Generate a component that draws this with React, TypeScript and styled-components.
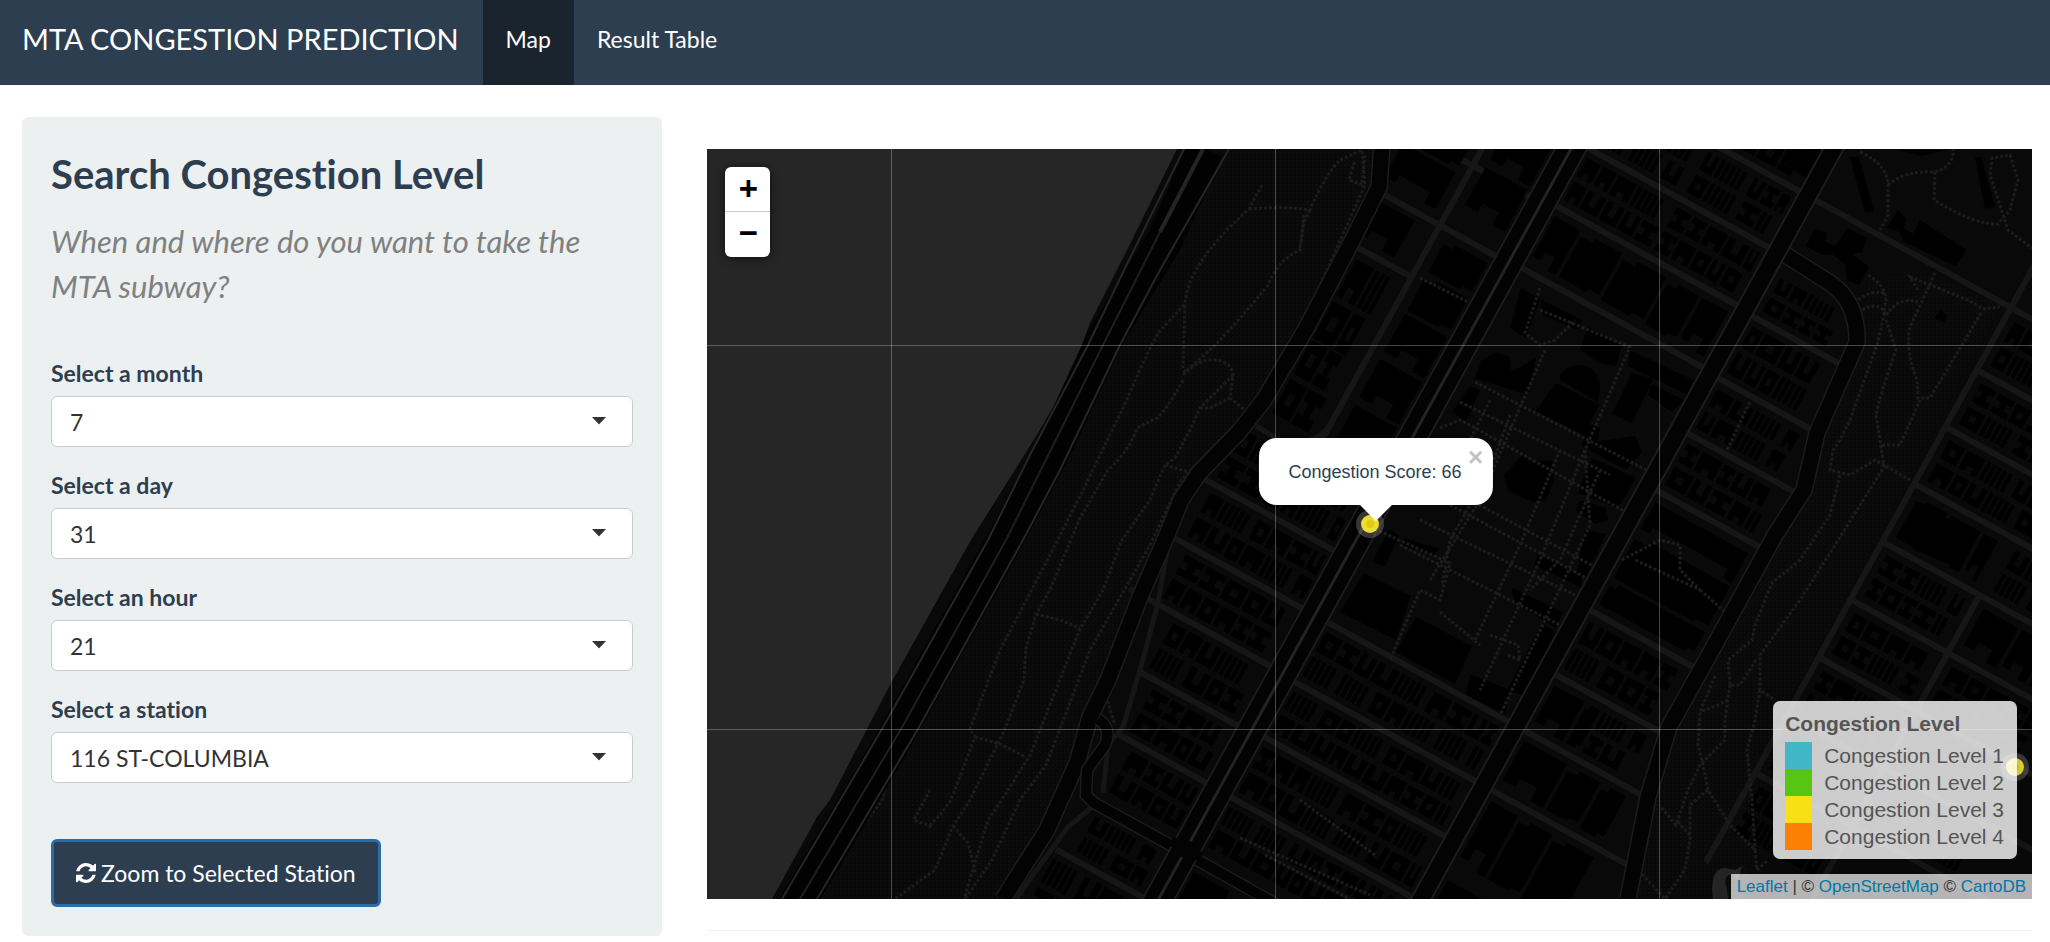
import React, { useState } from "react";
import styled, { createGlobalStyle, css } from "styled-components";

const GlobalStyle = createGlobalStyle`
  *, *::before, *::after { box-sizing: border-box; }
  body {
    margin: 0;
    background: #fff;
    color: #2c3e50;
    font-family: Lato, "Liberation Sans", sans-serif;
    font-size: 23px;
    font-variant-ligatures: none;
    line-height: 32px;
  }
`;

/* ---------- navigation ---------- */

const Navbar = styled.header`
  display: flex;
  align-items: stretch;
  min-height: 85px;
  background: #2c3e50;
`;

const Brand = styled.a`
  display: flex;
  align-items: center;
  padding: 0 24px 8px 22px;
  color: #fff;
  font-size: 29px;
  text-decoration: none;
`;

const Tabs = styled.nav`
  display: flex;
`;

const Tab = styled.a<{ $active?: boolean }>`
  display: flex;
  align-items: center;
  padding: 0 23px 8px;
  color: #fff;
  text-decoration: none;
  background: ${(p) => (p.$active ? "#1a242f" : "transparent")};
`;

/* ---------- page ---------- */

const Page = styled.main`
  display: grid;
  grid-template-columns: minmax(0, 640fr) minmax(0, 1325fr);
  column-gap: 45px;
  align-items: start;
  padding: 32px 18px 0 22px;
`;

const Sidebar = styled.form`
  padding: 29px;
  border-radius: 6px;
  background: #ecf0f1;
`;

const Title = styled.h2`
  margin: 6px 0 23px;
  font-size: 40px;
  font-weight: 700;
  line-height: 44px;
`;

const Lead = styled.p`
  margin: 0 0 48px;
  color: gray;
  font-size: 31px;
  font-style: italic;
  line-height: 45px;
`;

const Field = styled.div`
  margin-bottom: 22px;
`;

const Label = styled.label`
  display: block;
  margin-bottom: 7px;
  font-weight: 700;
`;

const SelectBox = styled.div`
  position: relative;
`;

const Select = styled.select`
  display: block;
  width: 100%;
  height: 51px;
  padding: 0 48px 0 18px;
  border: 1px solid #ccc;
  border-radius: 6px;
  background: #fff;
  color: #333;
  font: inherit;
  appearance: none;
`;

const Caret = styled.svg`
  position: absolute;
  top: 21px;
  right: 27px;
  width: 14px;
  height: 8px;
  fill: #333;
  pointer-events: none;
`;

const ZoomToStation = styled.button`
  display: flex;
  align-items: center;
  gap: 5px;
  height: 68px;
  margin-top: 56px;
  padding: 0 22px;
  border: 3px solid #2c6ca6;
  border-radius: 6px;
  background: #2c3e50;
  color: #fff;
  font: inherit;
`;

const RefreshIcon = styled.svg`
  width: 20px;
  height: 20px;
  fill: currentColor;
`;

const Content = styled.section`
  padding-top: 32px;
`;

const Rule = styled.hr`
  height: 1px;
  margin: 31px 0 0;
  border: 0;
  background: #ecf0f1;
`;

/* ---------- map ---------- */

const MapFrame = styled.div`
  position: relative;
  height: 750px;
  overflow: hidden;
  background: #090909;
  font-family: "Liberation Sans", Arial, sans-serif;
`;

const Tiles = styled.svg`
  display: block;
  width: 100%;
  height: 100%;
`;

const ZoomControl = styled.div`
  position: absolute;
  top: 18px;
  left: 18px;
  width: 45px;
  border-radius: 6px;
  background: #fff;
  box-shadow: 0 1px 8px rgba(0, 0, 0, 0.65);
`;

const ZoomButton = styled.button<{ $divided?: boolean }>`
  display: flex;
  align-items: center;
  justify-content: center;
  width: 45px;
  height: 45px;
  padding: 2px 0 0 2px;
  border: 0;
  background: transparent;
  color: #000;
  font: 700 33px/45px "Liberation Mono", monospace;
  ${(p) =>
    p.$divided &&
    css`
      padding-top: 5px;
      border-bottom: 1px solid #ccc;
    `}
`;

const Popup = styled.div`
  position: absolute;
  bottom: calc(50% + 19px);
  left: calc(50% + 6px);
  transform: translateX(-50%);
  padding: 21px 31px 19px 30px;
  border-radius: 18px;
  background: #fff;
  color: #2c3e50;
  font-size: 18px;
  line-height: 27px;
  white-space: nowrap;
`;

const PopupTip = styled.svg`
  position: absolute;
  top: 100%;
  left: calc(50% - 16px);
  width: 32px;
  height: 16px;
  fill: #fff;
`;

const PopupClose = styled.button`
  position: absolute;
  top: 7px;
  right: 5px;
  width: 24px;
  height: 24px;
  padding: 0;
  border: 0;
  background: transparent;
  color: #c3c3c3;
  font: 700 26px/24px "Liberation Sans", Arial, sans-serif;
`;

const Legend = styled.aside`
  position: absolute;
  right: 15px;
  bottom: 40px;
  padding: 9px 13px 9px 12px;
  border-radius: 7px;
  background: rgba(255, 255, 255, 0.8);
  box-shadow: 0 0 22px rgba(0, 0, 0, 0.2);
  color: #555;
  font-size: 21px;
  line-height: 27px;
`;

const LegendTitle = styled.strong`
  display: block;
  margin-bottom: 5px;
`;

const LegendRow = styled.div`
  display: flex;
  gap: 12px;
`;

const Swatch = styled.i<{ $color: string }>`
  width: 27px;
  height: 27px;
  background: ${(p) => p.$color};
`;

const Attribution = styled.footer`
  position: absolute;
  right: 0;
  bottom: 0;
  padding: 0 6px;
  background: rgba(255, 255, 255, 0.7);
  color: #333;
  font-size: 17px;
  line-height: 25px;

  a {
    color: #0078a8;
    text-decoration: none;
  }
`;

/* ---------- street map drawing ---------- */

/* The street grid is turned by this angle; blocks are listed in the grid's own
   frame, whose origin is the top end of Broadway. */
const GRID = "translate(1571 149) rotate(28.8)";

type Block = [number, number, number, number]; // x0, x1, y0, y1

const crossStreets: [number, number, number][] = [
  // y, x0, x1
  [-140, 0, 230], [-73, 0, 720], [-9, 0, 230], [57, 0, 230], [128, 0, 230],
  [59, 230, 342], [130, 230, 352], [193, 230, 366], [258, 230, 364], [395, 230, 364],
  [468, 230, 364], [532, 0, 379], [600, 0, 394], [663, 0, 230], [732, 0, 230],
  [130, -150, 0], [62, -160, 0], [189, -148, -78], [466, -170, 0], [532, -169, 0], [598, -175, 0],
  [666, -128, 0], [731, -114, 0], [862, -114, 0],
  [-2, 462, 720], [63, 462, 720], [128, 462, 720], [194, 462, 760], [260, 462, 760],
  [326, 462, 760], [392, 462, 760], [458, 462, 760],
];

const fineBlocks: Block[] = [
  [18, 118, -64, -18], [122, 216, -64, -18], [18, 116, 0, 48], [121, 216, 0, 48],
  [122, 216, -130, -82], [246, 318, 12, 50],
  [244, 330, 68, 121], [244, 338, 140, 184], [244, 350, 202, 249],
  [244, 350, 405, 459], [300, 350, 478, 523],
  [18, 216, 541, 591], [18, 216, 609, 655], [18, 216, 672, 724], [18, 216, 741, 786],
  [-135, -90, 200, 290], [-135, -90, 292, 375],
  [-152, -18, 404, 458], [-150, -18, 475, 524], [-142, -18, 541, 590],
  [-120, -18, 607, 658], [-106, -18, 675, 723], [-95, -18, 740, 786], [-95, -18, 814, 854], [-112, -18, 871, 930],
  [472, 563, 8, 54], [472, 620, 73, 119], [472, 563, 204, 250], [472, 563, 270, 316], [472, 563, 336, 382],
  [583, 690, 270, 316], [583, 690, 336, 382], [472, 563, 402, 448], [583, 690, 402, 448],
  [583, 690, 138, 184], [472, 563, 468, 520], [472, 563, -62, -12], [574, 690, 73, 119],
];

const largeBlocks: Block[] = [
  [18, 216, 67, 118], [-150, -90, 6, 118], [-66, -18, 6, 118], [-66, -18, 140, 380],
  [244, 350, 269, 385], [244, 296, 478, 523], [244, 360, 541, 591], [244, 374, 610, 680],
  [244, 374, 700, 790], [472, 563, 138, 184], [583, 690, 204, 250], [18, 110, -130, -82],
  [-150, -90, 138, 180], [18, 216, 815, 860],
];

const pseudo = (n: number) => {
  const s = Math.sin(n * 127.1 + 31.7) * 43758.5453;
  return s - Math.floor(s);
};

/* Two rows of tenement footprints back to back, each with light wells cut in. */
const tenements = ([x0, x1, y0, y1]: Block, seed: number) => {
  const out: string[] = [];
  const depth = (y1 - y0) / 2 - 3;
  const top0 = (r: number) => (r ? y0 + depth + 6 : y0);
  for (let r = 0; r < 2; r++) {
    let x = x0;
    let k = seed * 53 + r * 17;
    while (x < x1 - 8) {
      const kind = Math.floor(pseudo(k) * 5);
      const w = Math.min(kind === 0 ? 4 : 13 + Math.floor(pseudo(k + 0.5) * 10), x1 - x);
      const t = top0(r);
      const b = t + depth;
      const a = x + w * 0.32;
      const c = x + w * 0.68;
      const e = depth * 0.32;
      if (kind === 0) {
        for (let i = 0; i < 5 && x < x1 - 5; i++) {
          out.push(`M${x} ${t}h4v${depth}h-4z`);
          x += 6;
        }
      } else if (kind === 1) {
        out.push(`M${x} ${t}H${x + w}V${t + e}H${c}V${b - e}H${x + w}V${b}H${x}V${b - e}H${a}V${t + e}H${x}z`);
      } else if (kind === 2) {
        out.push(`M${x} ${t}H${a}V${b - e}H${c}V${t}H${x + w}V${b}H${x}z`);
      } else if (kind === 3) {
        out.push(`M${x} ${t}H${x + w}V${b}H${x}zM${a} ${t + e}V${b - e}H${c}V${t + e}z`);
      } else {
        out.push(`M${x} ${t}H${x + w}V${b}H${c}V${b - e}H${a}V${b}H${x}z`);
      }
      x += w + 3;
      k += 1.3;
    }
  }
  return out.join("");
};

/* Institutional buildings: a few big masses per block. */
const halls = ([x0, x1, y0, y1]: Block, seed: number) => {
  const out: string[] = [];
  const wide = x1 - x0 > y1 - y0;
  const end = wide ? x1 : y1;
  let p = wide ? x0 : y0;
  let k = seed * 29 + 3;
  while (p < end - 12) {
    const s = Math.min(26 + pseudo(k) * 26, end - p);
    const n = s * 0.3;
    const [x, y, w, h] = wide ? [p, y0, s, y1 - y0] : [x0, p, x1 - x0, s];
    out.push(
      pseudo(k + 0.3) > 0.5
        ? `M${x} ${y}h${w}v${h}h${-n}v${-h * 0.3}h${-(w - 2 * n)}v${h * 0.2}h${-n}z`
        : `M${x} ${y + 5}h${n}v-5h${w - n}v${h - 4}h${-n}v4h${-(w - n)}z`
    );
    p += s + 4;
    k += 1.7;
  }
  return out.join("");
};

const campusHalls =
  "M1521 288L1540 299L1526 338L1510 328ZM1540 299L1582 320L1578 330L1544 316ZM1588 327L1622 345L1616 366L1597 362L1580 349Z" +
  "M1560 377C1566 360 1600 360 1600 388L1598 402L1560 380ZM1556 383L1599 405L1583 435L1536 411ZM1496 352L1510 357L1511 372L1536 358L1528 395L1474 378L1482 360Z" +
  "M1630 350L1693 380L1688 395L1628 366ZM1632 373L1653 379L1632 423L1612 414ZM1652 384L1684 400L1672 412L1648 395Z" +
  "M1522 455L1532 462L1552 460L1554 480L1546 500L1532 502L1508 490L1504 475L1513 466Z" +
  "M1585 423L1600 428L1597 442L1635 436L1642 452L1626 470L1582 446ZM1592 458L1636 478L1618 508L1578 493ZM1580 500L1606 508L1608 520L1596 524L1576 511Z" +
  "M1470 386L1480 390L1466 422L1452 412ZM1404 538L1439 549L1434 556L1400 545ZM1512 588L1563 612L1556 628L1514 602Z" +
  "M1416 617L1472 646L1455 684L1396 652ZM1542 624L1555 632L1527 697L1507 690ZM1470 674L1510 690L1505 714L1466 695ZM1538 554L1582 575L1582 588L1534 565Z" +
  "M1585 530L1606 534L1586 577L1577 572ZM1364 573L1411 596L1396 640L1340 612ZM1390 529L1399 536L1385 566L1372 562Z";

const parkHalls =
  "M1850 157L1859 157L1874 211L1865 213ZM1975 157L1981 157L1995 206L1985 209ZM1898 210L1906 218L1904 228L1913 234L1920 220L1966 250L1956 266L1904 242L1900 232L1887 228Z" +
  "M1815 229L1827 233L1825 242L1835 246L1840 240L1847 228L1867 238L1862 252L1852 254L1869 267L1859 285L1847 280L1845 264L1832 254L1822 255L1806 246Z" +
  "M1788 150L1821 150L1806 178L1786 165ZM1940 309L1947 315L1944 323L1935 318Z" +
  "M1914 501L1938 508L1940 516L1970 527L1953 566L1913 549L1926 525ZM1900 150L1946 150L1922 156Z";

const dottedPaths = [
  "M1262 185L1249 209Q1215 240 1201 262Q1186 285 1185 304Q1170 320 1159 332C1140 365 1128 400 1117 420L1083 490L1050 555L1000 650L970 729L975 737L951 800L940 815L928 827",
  "M1249 209Q1285 206 1310 210Q1325 175 1340 160L1362 150L1365 185L1300 330L1256 404L1210 450L1180 482L1150 545L1090 650L1060 729L1046 765L1020 800L992 860L965 899",
  "M1310 210L1304 222L1300 250Q1278 260 1268 285Q1240 320 1210 350L1185 372L1183 368Q1184 340 1185 304",
  "M1183 375Q1200 358 1215 360Q1232 362 1233 375L1230 398L1245 410M1183 380Q1168 408 1157 418L1137 428Q1130 450 1108 470L1080 518L1050 590L1036 614L1026 648L1024 680L1005 729L970 800L953 826L935 870L895 899",
  "M1233 375L1200 408L1190 430L1175 458L1165 465L1150 500L1122 540L1103 590L1080 629L1046 715L1030 755L1005 795L988 820L964 899",
  "M1036 614L1060 620L1080 628M975 737L1000 744L1026 757M1165 465L1195 474M1200 408L1210 408L1230 398",
  "M990 540L970 580L950 625L910 712L882 800L872 814L840 850M820 899L845 855M953 826L968 843L976 875M930 790L914 820L932 827",
  "M1365 155L1362 185L1349 180L1355 160M1304 215L1300 250",
  "M1860 152Q1890 165 1888 190L1888 215L1880 230M1888 185Q1905 170 1935 172Q1955 165 1953 149M1935 172L1934 200Q1975 225 1998 224L2010 210L2018 180L2010 155L1992 158L1990 175L2008 230L2032 248",
  "M1918 290L1910 277L1968 300L1983 309L2000 307M1935 273L1910 327Q1905 350 1917 380L1918 398L1930 398L1965 340L1982 311",
  "M1868 275Q1885 285 1886 300L1884 315L1877 345L1850 420L1840 440L1833 450L1830 470L1850 475L1875 460L1910 480M1858 300Q1870 290 1885 293M1862 310Q1880 300 1886 315",
  "M1886 315L1895 305Q1905 298 1918 302M1886 320L1896 350Q1880 395 1876 415L1880 440L1884 467L1835 545L1800 600L1760 655L1760 690L1775 700",
  "M1882 445L1900 445L1920 400M1840 475L1830 515L1800 560L1772 583L1755 625L1752 640L1728 660L1730 685L1740 685L1756 660M1730 685L1725 720L1725 740L1710 755L1700 765L1688 790L1676 825L1660 806",
  "M1715 676L1700 712L1698 745L1702 760L1708 790L1730 825L1755 850L1757 870L1768 860M1708 790L1690 805L1690 840L1685 870L1665 899L1642 874M1690 835L1676 820",
  "M1760 690L1755 720L1747 750L1752 800L1755 850M1728 700L1718 705L1700 712",
  "M1540 288L1525 333L1540 345L1555 340L1575 320M1540 310L1630 347L1585 450L1590 525L1500 715",
  "M1420 278L1470 303M1440 428L1460 420L1475 428L1640 520M1475 382L1662 478M1460 402L1610 475M1545 350L1480 500L1430 580M1585 450L1540 560L1480 690",
  "M1370 527L1450 563L1440 600L1420 590L1390 660M1400 545L1570 630M1420 520L1575 595M1450 505L1590 580M1470 500L1595 567",
  "M1490 400L1470 440L1440 500M1510 415L1490 470L1450 540L1442 585M1560 450L1520 545L1475 640M1600 470L1560 560L1530 590",
  "M1440 612L1480 645M1490 635L1518 645L1520 660L1508 655M1622 560L1660 540L1680 545L1680 570L1700 590L1635 560M1700 590L1725 612",
  "M1760 270L1740 310M1750 402L1727 450M1106 696L1115 725M1300 800L1375 855M1240 838L1370 895M1265 855L1350 899",
];

const StreetMap = () => (
  <Tiles viewBox="707 149 1325 750" preserveAspectRatio="xMidYMid slice" aria-hidden="true">
    <defs>
      <pattern id="park" width="4" height="4" patternUnits="userSpaceOnUse">
        <rect width="4" height="4" fill="#090909" />
        <rect width="2" height="2" fill="#0d0d0d" />
      </pattern>
    </defs>
    <rect x="0" y="0" width="2800" height="1100" fill="#090909" />
    <path
      fill="url(#park)"
      d="M1229 149L1120 340L1023 540L817 899H1003L1047 830L1077 763L1108 680L1166 540L1199 473L1238 433L1264 400L1363 240L1383 149ZM1869 280L1920 270L2000 305L1960 380L1880 530L1790 700L1740 899H1628L1669 727L1778 530L1858 340Z"
    />
    {/* river */}
    <path fill="#262626" d="M0 0H1230L1177 149L1127 250L1090 323L1069 380L1038 433L971 540L891 683L830 800L817 817L772 899L680 1100H0Z" />
    <path
      fill="#242424"
      d="M1713 899L1712 890L1713 880Q1716 867 1725 868L1735 870L1742 866L1738 880L1732 874Q1722 876 1727 888L1728 899Z"
    />

    {/* cross streets */}
    <g transform={GRID} stroke="#161616" strokeWidth="6" fill="none">
      {crossStreets.map(([y, x0, x1]) => (
        <path key={`${y}:${x0}`} d={`M${x0} ${y}H${x1}`} />
      ))}
      <path d="M-78 -80V393M462 -160V560M573 194V560" />
    </g>
    <g stroke="#161616" strokeWidth="5" fill="none">
      <path d="M1329 427Q1310 448 1280 440L1256 426" />
      <path d="M1168 547L1157 607L1142 663L1123 727L1108 745L1103 793M1092 807L1068 827L1040 865L1016 899" />
    </g>

    {/* buildings */}
    <g transform={GRID} fill="#000" fillRule="evenodd">
      {fineBlocks.map((b, i) => (
        <path key={i} d={tenements(b, i + 1)} />
      ))}
      {largeBlocks.map((b, i) => (
        <path key={i} d={halls(b, i + 1)} />
      ))}
    </g>
    <path fill="#000" d={campusHalls + parkHalls} />

    {/* footpaths */}
    <g fill="none" stroke="#1c1c1c" strokeWidth="3" strokeDasharray="3 2">
      {dottedPaths.map((d) => (
        <path key={d} d={d} />
      ))}
    </g>

    {/* parkway along the river */}
    <g fill="none" strokeLinejoin="round">
      <path stroke="#020202" strokeWidth="36" d="M1205 149L1165 240L1104 340L1058 440L1005 540L949 640L891 745L800 899L780 940" />
      <path stroke="#262626" strokeWidth="2" d="M1184 149L1128 262L1088 345L1030 455L988 540L882 729L782 899" />
      <path stroke="#242424" strokeWidth="4" d="M1203 149L1160 232" />
      <path stroke="#1e1e1e" strokeWidth="2" d="M1160 232L1103 345L1006 540L901 729L800 899" />
      <path stroke="#262626" strokeWidth="2" d="M1229 149L1160 270L1120 345L1060 470L1023 540L918 729L817 899" />
    </g>

    {/* drives */}
    {[
      "M1383 130L1379 187L1351 243L1307 327L1264 400L1238 433L1199 473L1181 500L1167 535L1140 597L1108 680L1090 717L1077 763L1047 830L1003 899",
      "M1778 250L1830 283Q1858 302 1857 342L1817 433L1804 490L1775 535L1708 657L1669 727L1648 797L1628 899",
      "M1098 719Q1112 728 1105 745L1087 770L1086 795L1094 803L1194 858L1290 912",
    ].map((d, i) => (
      <g key={d} fill="none">
        <path stroke="#1c1c1c" strokeWidth={i === 2 ? 13 : 18} d={d} />
        <path stroke="#030303" strokeWidth={i === 2 ? 10 : 15} d={d} />
      </g>
    ))}

    {/* avenues */}
    <g transform={GRID}>
      <path d="M-14 -80V900M14 -80V900" stroke="#1c1c1c" strokeWidth="2" />
      <path d="M0 -80V900" stroke="#030303" strokeWidth="26" />
      <path d="M0 -80V900" stroke="#232323" strokeWidth="3" />
      <path d="M230 -200V900" stroke="#1c1c1c" strokeWidth="20" />
      <path d="M230 -200V900" stroke="#030303" strokeWidth="16" />
      <path d="M-17 799H17M0 790V808" stroke="#030303" strokeWidth="10" />
    </g>

    {/* tile seams */}
    <path d="M891.5 0V1100M1275.5 0V1100M1659.5 0V1100M300 345.5H2500M300 729.5H2500" stroke="#fff" strokeOpacity="0.27" />

    {/* stations */}
    {[
      [1370, 524],
      [2015, 767],
    ].map(([x, y]) => (
      <g key={x}>
        <circle cx={x} cy={y} r="14" fill="#fff" fillOpacity="0.2" />
        <circle cx={x} cy={y} r="9" fill="#ecdc33" />
        <circle cx={x} cy={y} r="4" fill="#e0cb13" />
      </g>
    ))}
  </Tiles>
);

/* ---------- data ---------- */

const fields = [
  { id: "month", label: "Select a month", value: "7" },
  { id: "day", label: "Select a day", value: "31" },
  { id: "hour", label: "Select an hour", value: "21" },
  { id: "station", label: "Select a station", value: "116 ST-COLUMBIA" },
];

const levels = [
  { name: "Congestion Level 1", color: "#41b6c4" },
  { name: "Congestion Level 2", color: "#57c613" },
  { name: "Congestion Level 3", color: "#f8e016" },
  { name: "Congestion Level 4", color: "#fc8003" },
];

export default function App() {
  const [popupOpen, setPopupOpen] = useState(true);

  return (
    <>
      <GlobalStyle />
      <Navbar>
        <Brand href="#">MTA CONGESTION PREDICTION</Brand>
        <Tabs>
          <Tab href="#map" $active>
            Map
          </Tab>
          <Tab href="#results">Result Table</Tab>
        </Tabs>
      </Navbar>
      <Page>
        <Sidebar>
          <Title>Search Congestion Level</Title>
          <Lead>When and where do you want to take the MTA subway?</Lead>
          {fields.map((f) => (
            <Field key={f.id}>
              <Label htmlFor={f.id}>{f.label}</Label>
              <SelectBox>
                <Select id={f.id} defaultValue={f.value}>
                  <option>{f.value}</option>
                </Select>
                <Caret viewBox="0 0 14 8">
                  <path d="M0 0H14L7 7.5Z" />
                </Caret>
              </SelectBox>
            </Field>
          ))}
          <ZoomToStation type="button" onClick={() => setPopupOpen(true)}>
            <RefreshIcon viewBox="0 0 1536 1536">
              <path d="M1511 928q0 5-1 7-64 268-268 434.500t-478 166.500q-146 0-282.500-55t-243.500-157l-129 129q-19 19-45 19t-45-19-19-45v-448q0-26 19-45t45-19h448q26 0 45 19t19 45-19 45l-137 137q71 66 161 102t187 36q134 0 250-65t186-179q11-17 53-117 8-23 30-23h192q13 0 22.500 9.500t9.500 22.500zM1536 128v448q0 26-19 45t-45 19h-448q-26 0-45-19t-19-45 19-45l138-138q-148-137-349-137-134 0-250 65t-186 179q-11 17-53 117-8 23-30 23h-199q-13 0-22.500-9.500t-9.500-22.500v-7q65-268 270-434.500t480-166.500q146 0 284 55.500t245 156.500l130-129q19-19 45-19t45 19 19 45z" />
            </RefreshIcon>
            Zoom to Selected Station
          </ZoomToStation>
        </Sidebar>
        <Content>
          <MapFrame>
            <StreetMap />
            <ZoomControl>
              <ZoomButton type="button" $divided>
                +
              </ZoomButton>
              <ZoomButton type="button">−</ZoomButton>
            </ZoomControl>
            {popupOpen && (
              <Popup>
                Congestion Score: 66
                <PopupTip viewBox="0 0 32 16">
                  <path d="M0 0H32L16 16Z" />
                </PopupTip>
                <PopupClose type="button" onClick={() => setPopupOpen(false)}>
                  ×
                </PopupClose>
              </Popup>
            )}
            <Legend>
              <LegendTitle>Congestion Level</LegendTitle>
              {levels.map((l) => (
                <LegendRow key={l.name}>
                  <Swatch $color={l.color} />
                  {l.name}
                </LegendRow>
              ))}
            </Legend>
            <Attribution>
              <a href="#leaflet">Leaflet</a> | © <a href="#osm">OpenStreetMap</a> © <a href="#cartodb">CartoDB</a>
            </Attribution>
          </MapFrame>
          <Rule />
        </Content>
      </Page>
    </>
  );
}
